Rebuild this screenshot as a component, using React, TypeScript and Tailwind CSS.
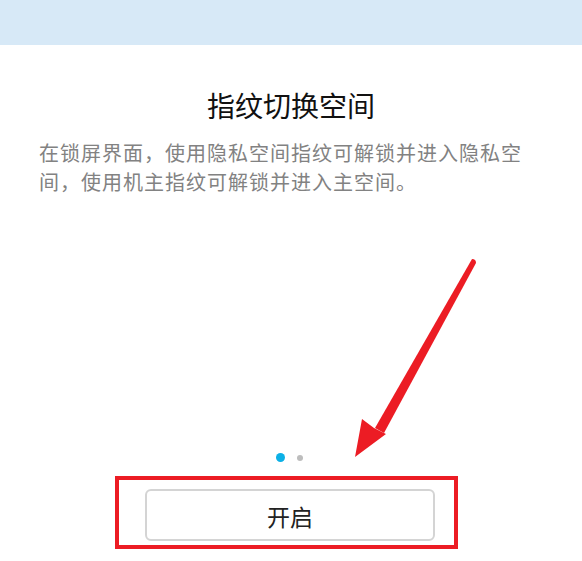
export default function App() {
  return (
    <div
      className="relative w-[582px] h-[561px] overflow-hidden bg-white"
      style={{ fontFamily: '"Noto Sans CJK SC", "Noto Sans", sans-serif' }}
    >
      {/* top band */}
      <div className="h-[45px] bg-[#d7e9f7]" />

      <div className="flex flex-col">
        <h1 className="mt-[42px] text-center text-[28px] leading-[36px] text-[#111]">
          指纹切换空间
        </h1>
        <p className="mt-[15px] pl-[39px] pr-[36px] text-[20px] leading-[29px] tracking-[1px] text-[#828282]">
          在锁屏界面，使用隐私空间指纹可解锁并进入隐私空间，使用机主指纹可解锁并进入主空间。
        </p>

        {/* page dots */}
        <div className="mt-[257px] flex h-[9px] items-center justify-center gap-[12px] pr-[4px]">
          <span className="h-[9px] w-[9px] rounded-full bg-[#0cb0e6]" />
          <span className="h-[6px] w-[6px] rounded-full bg-[#bdbdbd]" />
        </div>

        {/* highlighted button */}
        <div className="mt-[14px] ml-[115px] w-[343px] h-[73px] border-[4px] border-[#ec1c24] pl-[26px] pr-[19px] pt-[9px]">
          <button className="h-[52px] w-[290px] rounded-[6px] border-2 border-[#d4d4d4] bg-white pt-[2px] text-[23px] text-[#222]">
            开启
          </button>
        </div>
      </div>

      {/* red arrow annotation */}
      <svg
        className="absolute left-0 top-0 pointer-events-none"
        width="582"
        height="561"
        viewBox="0 0 582 561"
      >
        <path
          d="M472 259 Q476 259 476 263 L384 433 L375 428 Z"
          fill="#ec1c24"
        />
        <path d="M355 457 L362 419 L374 428 L386 434 Z" fill="#ec1c24" />
      </svg>
    </div>
  );
}
